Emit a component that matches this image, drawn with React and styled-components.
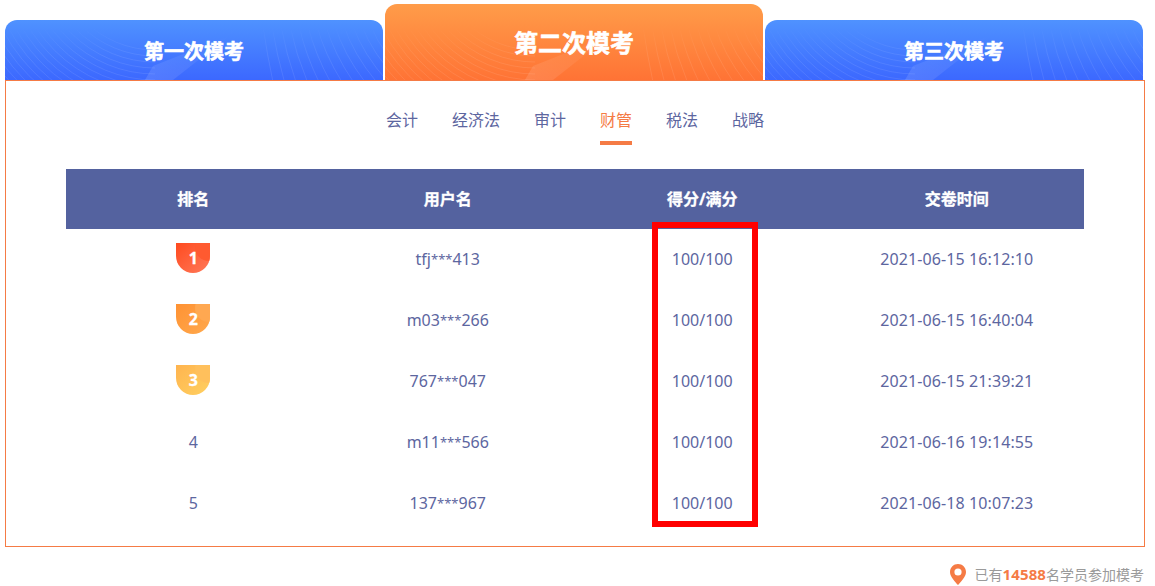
import React from 'react';
import styled, { createGlobalStyle } from 'styled-components';

const INDIGO = '#54629f';
const BODY_TEXT = '#5d669f';
const ORANGE = '#f57b45';
const CJK = '"Noto Sans", "Noto Sans CJK SC", sans-serif';

const GlobalStyle = createGlobalStyle`
  html, body {
    margin: 0;
    padding: 0;
    background: #fff;
    overflow: hidden;
  }
  body {
    font-family: ${CJK};
  }
`;

const Page = styled.div`
  width: 1155px;
  height: 586px;
  padding-left: 5px;
  box-sizing: border-box;
`;

const TabRow = styled.div`
  display: flex;
  align-items: flex-end;
  gap: 2px;
  height: 80px;
`;

const Tab = styled.div`
  position: relative;
  width: 378px;
  height: ${({ $active }) => ($active ? '76px' : '60px')};
  border-radius: 12px 12px 0 0;
  overflow: hidden;
  display: flex;
  align-items: center;
  justify-content: center;
  padding-top: ${({ $active }) => ($active ? '2px' : '4px')};
  box-sizing: border-box;
  color: #fff;
  font-weight: 700;
  font-size: ${({ $active }) => ($active ? '24px' : '20px')};
  -webkit-text-stroke: 0.6px #fff;
  background: ${({ $active }) =>
    $active
      ? 'linear-gradient(180deg, #ff9c49 0%, #ff7335 100%)'
      : 'linear-gradient(180deg, #4f92ff 0%, #3c68ff 100%)'};

  span {
    position: relative;
    line-height: 1;
  }
`;

const PatternSvg = styled.svg`
  position: absolute;
  left: 0;
  bottom: 0;
  width: 378px;
  height: 60px;
`;

const range = (n) => Array.from({ length: n }, (_, i) => i);

// concentric arcs on the left, fanned lines on the right, a small mesh in the middle
const TabPattern = () => (
  <PatternSvg viewBox="0 0 378 60" fill="none" stroke="#fff" strokeOpacity="0.09" strokeWidth="1">
    <defs>
      <linearGradient id="pattern-fade" x1="0" y1="0" x2="0" y2="1">
        <stop offset="0.1" stopColor="#000" />
        <stop offset="0.6" stopColor="#fff" />
      </linearGradient>
      <mask id="pattern-mask" maskUnits="userSpaceOnUse" x="0" y="0" width="378" height="60">
        <rect width="378" height="60" fill="url(#pattern-fade)" />
      </mask>
      <linearGradient id="pattern-wedge" x1="0" y1="1" x2="1" y2="0">
        <stop offset="0" stopColor="#fff" stopOpacity="0.12" />
        <stop offset="1" stopColor="#fff" stopOpacity="0" />
      </linearGradient>
    </defs>
    <g mask="url(#pattern-mask)">
      {range(17).map((i) => {
        const r = 100 + i * 6;
        return <path key={i} d={`M${150 - r} -70 A${r} ${r} 0 0 0 150 ${r - 70}`} />;
      })}
      {range(14).map((i) => (
        <path key={i} d={`M${258 + i * 9} 6 Q${262 + i * 9.6} 34 ${268 + i * 11.5} 62`} />
      ))}
    </g>
    <path d="M140 60 L148 46 L224 16 L168 60 Z" fill="url(#pattern-wedge)" stroke="none" />
  </PatternSvg>
);

const Panel = styled.div`
  width: 1140px;
  height: 467px;
  box-sizing: border-box;
  border: 1px solid ${ORANGE};
  padding-top: 23px;
  display: flex;
  flex-direction: column;
  align-items: center;
`;

const Subjects = styled.div`
  display: flex;
  justify-content: center;
  gap: 34px;
  height: 41px;
`;

const Subject = styled.div`
  height: 41px;
  box-sizing: border-box;
  font-size: 16px;
  line-height: 32px;
  color: ${({ $active }) => ($active ? ORANGE : BODY_TEXT)};
  border-bottom: 4px solid ${({ $active }) => ($active ? ORANGE : 'transparent')};
`;

const Board = styled.div`
  position: relative;
  width: 1018px;
  margin-top: 24px;
`;

const Row = styled.div`
  display: grid;
  grid-template-columns: repeat(4, 1fr);
  height: ${({ $head }) => ($head ? '60px' : '61px')};
  align-items: center;
  text-align: center;
  font-size: 16px;
  font-weight: ${({ $head }) => ($head ? 700 : 400)};
  -webkit-text-stroke: ${({ $head }) => ($head ? '0.3px #fff' : '0')};
  color: ${({ $head }) => ($head ? '#fff' : BODY_TEXT)};
  background: ${({ $head }) => ($head ? INDIGO : 'transparent')};
`;

const Cell = styled.div`
  display: flex;
  justify-content: center;
  align-items: center;
  padding-bottom: 2px;
`;

const Stars = styled.span`
  font-size: 13px;
  line-height: 1;
  position: relative;
  top: -1px;
`;

const Time = styled.span`
  letter-spacing: 0.1px;
`;

const Highlight = styled.div`
  position: absolute;
  left: 586px;
  top: 53px;
  width: 106px;
  height: 305px;
  box-sizing: border-box;
  border: 6px solid #ff0000;
`;

const BadgeBox = styled.div`
  position: relative;
  width: 34px;
  height: 30px;
  margin-bottom: 2px;
  color: #fff;
  font-size: 16px;
  font-weight: 700;
  -webkit-text-stroke: 0.3px #fff;
  display: flex;
  align-items: center;
  justify-content: center;

  svg {
    position: absolute;
    inset: 0;
  }

  span {
    position: relative;
    line-height: 1;
  }
`;

const BADGE_COLORS = [
  ['#ff4a1f', '#ff7a5a', '#ff5a30'],
  ['#ff9233', '#ffa94d', '#ffa851'],
  ['#ffb44f', '#ffd060', '#ffc05c'],
];

const Badge = ({ rank }) => {
  const [from, to, shade] = BADGE_COLORS[rank - 1];
  const id = `badge-${rank}`;
  return (
    <BadgeBox>
      <svg width="34" height="30" viewBox="0 0 34 30">
        <defs>
          <linearGradient id={id} x1="0" y1="0" x2="1" y2="1">
            <stop offset="0" stopColor={from} />
            <stop offset="1" stopColor={to} />
          </linearGradient>
          <clipPath id={`${id}-clip`}>
            <path d="M0 0H34V13A17 17 0 0 1 0 13Z" />
          </clipPath>
        </defs>
        <path d="M0 0H34V13A17 17 0 0 1 0 13Z" fill={`url(#${id})`} />
        <circle cx="33" cy="4" r="14" fill={shade} clipPath={`url(#${id}-clip)`} />
      </svg>
      <span>{rank}</span>
    </BadgeBox>
  );
};

const Footer = styled.div`
  width: 1139px;
  margin-top: 16px;
  display: flex;
  justify-content: flex-end;
  align-items: center;
  gap: 9px;
  font-size: 14px;
  line-height: 22px;
  color: #9a9a9a;

  b {
    color: ${ORANGE};
    font-weight: 700;
    font-size: 15px;
    letter-spacing: 0.1px;
  }
`;

const PinIcon = () => (
  <svg width="16" height="21" viewBox="0 0 16 21">
    <path
      fillRule="evenodd"
      fill={ORANGE}
      d="M8 0C3.6 0 0 3.5 0 7.9C0 13 5.6 18 8 21C10.4 18 16 13 16 7.9C16 3.5 12.4 0 8 0ZM8 4.4A3.6 3.6 0 1 1 8 11.6A3.6 3.6 0 1 1 8 4.4Z"
    />
  </svg>
);

const ROWS = [
  ['tfj', '413', '2021-06-15 16:12:10'],
  ['m03', '266', '2021-06-15 16:40:04'],
  ['767', '047', '2021-06-15 21:39:21'],
  ['m11', '566', '2021-06-16 19:14:55'],
  ['137', '967', '2021-06-18 10:07:23'],
];

const SUBJECTS = ['会计', '经济法', '审计', '财管', '税法', '战略'];

export default function App() {
  return (
    <Page>
      <GlobalStyle />
      <TabRow>
        <Tab><TabPattern /><span>第一次模考</span></Tab>
        <Tab $active><TabPattern /><span>第二次模考</span></Tab>
        <Tab><TabPattern /><span>第三次模考</span></Tab>
      </TabRow>
      <Panel>
        <Subjects>
          {SUBJECTS.map((name) => (
            <Subject key={name} $active={name === '财管'}>{name}</Subject>
          ))}
        </Subjects>
        <Board>
          <Row $head>
            <Cell>排名</Cell>
            <Cell>用户名</Cell>
            <Cell>得分/满分</Cell>
            <Cell>交卷时间</Cell>
          </Row>
          {ROWS.map(([head, tail, time], i) => (
            <Row key={head}>
              <Cell>{i < 3 ? <Badge rank={i + 1} /> : i + 1}</Cell>
              <Cell><span>{head}<Stars>***</Stars>{tail}</span></Cell>
              <Cell>100/100</Cell>
              <Cell><Time>{time}</Time></Cell>
            </Row>
          ))}
          <Highlight />
        </Board>
      </Panel>
      <Footer>
        <PinIcon />
        <span>已有<b>14588</b>名学员参加模考</span>
      </Footer>
    </Page>
  );
}
